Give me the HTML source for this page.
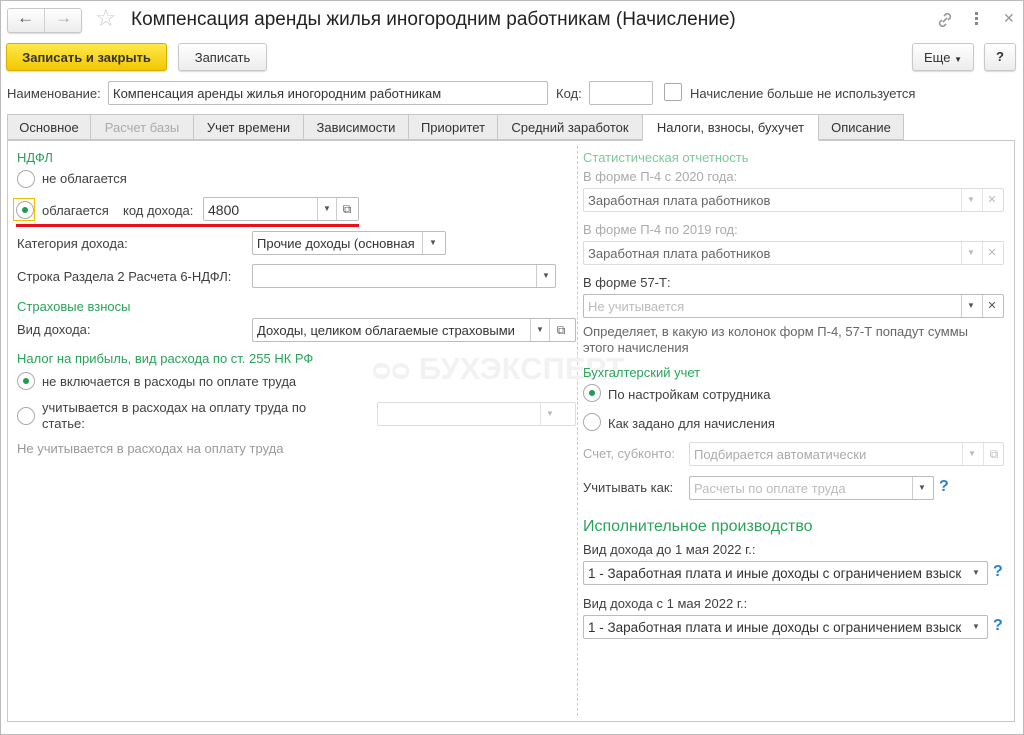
<!DOCTYPE html><html><head><meta charset="utf-8"><style>
*{box-sizing:border-box;margin:0;padding:0}
body{width:1024px;height:735px;background:#fff;font-family:"Liberation Sans",Arial,sans-serif;font-size:13px;color:#404040;position:relative;overflow:hidden}
.a{position:absolute;white-space:nowrap}
.btn{position:absolute;border:1px solid #c8c8c8;border-radius:3px;background:linear-gradient(#fff,#ececec);box-shadow:0 1px 1px rgba(0,0,0,.15);text-align:center;color:#333}
.inp{position:absolute;border:1px solid #bcbcbc;border-radius:2px;background:#fff;height:24px;padding:4px 0 0 4px;color:#333;white-space:nowrap;overflow:hidden}
.dis{border-color:#ddd;color:#aaa}
.sep{position:absolute;top:0;bottom:0;border-left:1px solid #ccc}
.dd{position:absolute;top:0;width:20px;height:22px;font-size:8px;text-align:center;line-height:22px;color:#555}
.g{color:#2aa35a}
.lg{color:#7cc99a}
.gr{color:#aaa}
.tab{position:absolute;top:114px;height:26px;border:1px solid #c8c8c8;background:#ececec;padding-top:5px;text-align:center;color:#333}
.r{position:absolute;width:18px;height:18px;border:1px solid #aaa;border-radius:50%;background:#fff}
.r.on:after{content:"";position:absolute;left:5px;top:5px;width:6px;height:6px;border-radius:50%;background:#1e9d4e}
.q{position:absolute;color:#2a7fd4;font-size:16px;font-weight:bold}
</style></head><body>
<div class="a" style="left:0;top:0;width:1024px;height:735px;border:1px solid #bbb"></div>
<div class="btn" style="left:7px;top:8px;width:75px;height:25px"></div>
<div class="a" style="left:44px;top:9px;height:23px;border-left:1px solid #d0d0d0"></div>
<div class="a" style="left:17px;top:8px;font-size:17px;color:#555">&#8592;</div>
<div class="a" style="left:55px;top:8px;font-size:17px;color:#aaa">&#8594;</div>
<div class="a" style="left:95px;top:4px;font-size:24px;color:#ccc">&#9734;</div>
<div class="a" style="left:131px;top:9px;font-size:19px;color:#222">Компенсация аренды жилья иногородним работникам (Начисление)</div>
<svg class="a" style="left:935px;top:10px" width="20" height="20" viewBox="0 0 20 20"><g fill="none" stroke="#999" stroke-width="1.6"><path d="M9 6l2-2a3 3 0 014 4l-2 2"/><path d="M11 14l-2 2a3 3 0 01-4-4l2-2"/><path d="M8 12l4-4"/></g></svg>
<div class="a" style="left:975px;top:12px;width:3px;height:3px;background:#888;box-shadow:0 5px #888,0 10px #888"></div>
<div class="a" style="left:1003px;top:10px;font-size:14px;color:#999">✕</div>
<div class="btn" style="left:6px;top:43px;width:161px;height:28px;background:linear-gradient(#ffe94a,#f2c700);border-color:#d4ae00;font-weight:bold;padding-top:6px;color:#333">Записать и закрыть</div>
<div class="btn" style="left:178px;top:43px;width:89px;height:28px;padding-top:6px">Записать</div>
<div class="btn" style="left:912px;top:43px;width:62px;height:28px;padding-top:6px">Еще <span style="font-size:8px">▼</span></div>
<div class="btn" style="left:984px;top:43px;width:32px;height:28px;padding-top:5px;font-weight:bold">?</div>
<div class="a" style="left:7px;top:86px">Наименование:</div>
<div class="inp" style="left:108px;top:81px;width:440px;height:24px">Компенсация аренды жилья иногородним работникам</div>
<div class="a" style="left:556px;top:86px">Код:</div>
<div class="inp" style="left:589px;top:81px;width:64px"></div>
<div class="a" style="left:664px;top:83px;width:18px;height:18px;border:1px solid #aaa;border-radius:2px"></div>
<div class="a" style="left:690px;top:86px">Начисление больше не используется</div>
<div class="tab" style="left:7px;width:84px">Основное</div>
<div class="tab" style="left:90px;width:104px;color:#aaa">Расчет базы</div>
<div class="tab" style="left:193px;width:111px">Учет времени</div>
<div class="tab" style="left:303px;width:106px">Зависимости</div>
<div class="tab" style="left:408px;width:90px">Приоритет</div>
<div class="tab" style="left:497px;width:146px">Средний заработок</div>
<div class="tab" style="left:818px;width:86px">Описание</div>
<div class="a" style="left:7px;top:140px;width:1008px;height:582px;border:1px solid #c8c8c8"></div>
<div class="tab" style="left:642px;width:177px;background:#fff;border-bottom-color:#fff;height:27px">Налоги, взносы, бухучет</div>
<div class="a" style="left:577px;top:146px;height:570px;border-left:1px dashed #ccc"></div>
<div class="a" style="left:372px;top:351px;font-size:31px;font-weight:bold;color:#f2f2f2">ᴑᴑ БУХЭКСПЕРТ</div>
<div class="a g" style="left:17px;top:150px">НДФЛ</div>
<div class="r" style="left:17px;top:170px"></div>
<div class="a" style="left:42px;top:171px">не облагается</div>
<div class="a" style="left:13px;top:198px;width:22px;height:23px;border:1px solid #f0c000"></div>
<div class="r on" style="left:16px;top:201px"></div>
<div class="a" style="left:42px;top:203px">облагается</div>
<div class="a" style="left:123px;top:203px">код дохода:</div>
<div class="inp" style="left:203px;top:197px;width:156px;font-size:14px">4800<div class="sep" style="left:113px"></div><div class="dd" style="left:113px">▼</div><div class="sep" style="left:132px"></div><div class="dd" style="left:133px;font-size:12px">⧉</div></div>
<div class="a" style="left:16px;top:224px;width:343px;height:3px;background:#e8101a"></div>
<div class="a" style="left:17px;top:236px">Категория дохода:</div>
<div class="inp" style="left:252px;top:231px;width:194px">Прочие доходы (основная<div class="sep" style="left:169px"></div><div class="dd" style="left:170px">▼</div></div>
<div class="a" style="left:17px;top:269px">Строка Раздела 2 Расчета 6-НДФЛ:</div>
<div class="inp" style="left:252px;top:264px;width:304px"><div class="sep" style="left:283px"></div><div class="dd" style="left:283px">▼</div></div>
<div class="a g" style="left:17px;top:299px">Страховые взносы</div>
<div class="a" style="left:17px;top:322px">Вид дохода:</div>
<div class="inp" style="left:252px;top:318px;width:324px">Доходы, целиком облагаемые страховыми<div class="sep" style="left:277px"></div><div class="dd" style="left:277px">▼</div><div class="sep" style="left:296px"></div><div class="dd" style="left:298px;font-size:12px">⧉</div></div>
<div class="a g" style="left:17px;top:351px">Налог на прибыль, вид расхода по ст. 255 НК РФ</div>
<div class="r on" style="left:17px;top:372px"></div>
<div class="a" style="left:42px;top:374px">не включается в расходы по оплате труда</div>
<div class="r" style="left:17px;top:407px"></div>
<div class="a" style="left:42px;top:400px;line-height:16px">учитывается в расходах на оплату труда по<br>статье:</div>
<div class="inp dis" style="left:377px;top:402px;width:199px"><div class="sep" style="left:162px;border-color:#e4e4e4"></div><div class="dd" style="left:162px;color:#bbb">▼</div></div>
<div class="a gr" style="left:17px;top:441px;color:#999">Не учитывается в расходах на оплату труда</div>
<div class="a lg" style="left:583px;top:150px">Статистическая отчетность</div>
<div class="a gr" style="left:583px;top:169px">В форме П-4 с 2020 года:</div>
<div class="inp dis" style="left:583px;top:188px;width:421px;color:#666">Заработная плата работников<div class="sep" style="left:377px;border-color:#e4e4e4"></div><div class="dd" style="left:377px;color:#bbb">▼</div><div class="sep" style="left:398px;border-color:#e4e4e4"></div><div class="dd" style="left:398px;color:#bbb;font-size:11px">✕</div></div>
<div class="a gr" style="left:583px;top:222px">В форме П-4 по 2019 год:</div>
<div class="inp dis" style="left:583px;top:241px;width:421px;color:#666">Заработная плата работников<div class="sep" style="left:377px;border-color:#e4e4e4"></div><div class="dd" style="left:377px;color:#bbb">▼</div><div class="sep" style="left:398px;border-color:#e4e4e4"></div><div class="dd" style="left:398px;color:#bbb;font-size:11px">✕</div></div>
<div class="a" style="left:583px;top:275px">В форме 57-Т:</div>
<div class="inp" style="left:583px;top:294px;width:421px;color:#bbb">Не учитывается<div class="sep" style="left:377px"></div><div class="dd" style="left:377px">▼</div><div class="sep" style="left:398px"></div><div class="dd" style="left:398px;font-size:11px">✕</div></div>
<div class="a" style="left:583px;top:324px;line-height:16px;color:#666">Определяет, в какую из колонок форм П-4, 57-Т попадут суммы<br>этого начисления</div>
<div class="a g" style="left:583px;top:365px">Бухгалтерский учет</div>
<div class="r on" style="left:583px;top:384px"></div>
<div class="a" style="left:608px;top:387px">По настройкам сотрудника</div>
<div class="r" style="left:583px;top:413px"></div>
<div class="a" style="left:608px;top:416px">Как задано для начисления</div>
<div class="a gr" style="left:583px;top:446px">Счет, субконто:</div>
<div class="inp dis" style="left:689px;top:442px;width:315px">Подбирается автоматически<div class="sep" style="left:272px;border-color:#e4e4e4"></div><div class="dd" style="left:272px;color:#bbb">▼</div><div class="sep" style="left:293px;border-color:#e4e4e4"></div><div class="dd" style="left:294px;color:#bbb;font-size:12px">⧉</div></div>
<div class="a" style="left:583px;top:480px">Учитывать как:</div>
<div class="inp" style="left:689px;top:476px;width:245px;color:#bbb">Расчеты по оплате труда<div class="sep" style="left:222px"></div><div class="dd" style="left:222px">▼</div></div>
<div class="q" style="left:939px;top:478px">?</div>
<div class="a g" style="left:583px;top:518px;font-size:16px">Исполнительное производство</div>
<div class="a" style="left:583px;top:542px">Вид дохода до 1 мая 2022 г.:</div>
<div class="inp" style="left:583px;top:561px;width:405px;font-size:13.5px">1 - Заработная плата и иные доходы с ограничением взыск<div class="sep" style="left:382px"></div><div class="dd" style="left:382px;background:#fff">▼</div></div>
<div class="q" style="left:993px;top:563px">?</div>
<div class="a" style="left:583px;top:596px">Вид дохода с 1 мая 2022 г.:</div>
<div class="inp" style="left:583px;top:615px;width:405px;font-size:13.5px">1 - Заработная плата и иные доходы с ограничением взыск<div class="sep" style="left:382px"></div><div class="dd" style="left:382px;background:#fff">▼</div></div>
<div class="q" style="left:993px;top:617px">?</div>
</body></html>
